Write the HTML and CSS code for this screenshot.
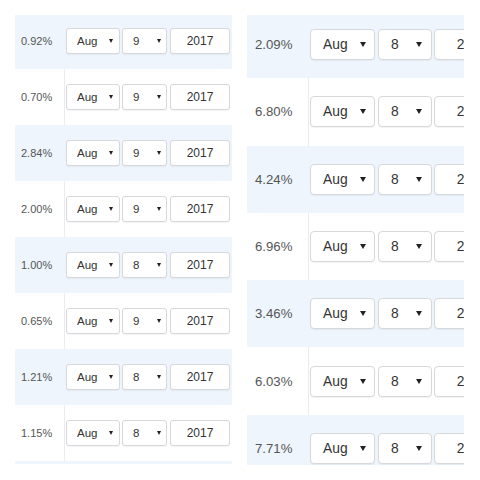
FILE: index.html
```
<!DOCTYPE html>
<html>
<head>
<meta charset="utf-8">
<link rel="stylesheet" href="styles.css">
</head>
<body>
<div class="wrap">
  <div class="panel sm">
    <div class="inner">
      <div class="row alt"><div class="pct">0.92%</div><div class="ctrl"><div class="sel mon"><span>Aug</span><i class="caret"></i></div><div class="sel day"><span>9</span><i class="caret"></i></div><div class="inp">2017</div></div></div>
      <div class="row"><div class="pct">0.70%</div><div class="ctrl"><div class="sel mon"><span>Aug</span><i class="caret"></i></div><div class="sel day"><span>9</span><i class="caret"></i></div><div class="inp">2017</div></div></div>
      <div class="row alt"><div class="pct">2.84%</div><div class="ctrl"><div class="sel mon"><span>Aug</span><i class="caret"></i></div><div class="sel day"><span>9</span><i class="caret"></i></div><div class="inp">2017</div></div></div>
      <div class="row"><div class="pct">2.00%</div><div class="ctrl"><div class="sel mon"><span>Aug</span><i class="caret"></i></div><div class="sel day"><span>9</span><i class="caret"></i></div><div class="inp">2017</div></div></div>
      <div class="row alt"><div class="pct">1.00%</div><div class="ctrl"><div class="sel mon"><span>Aug</span><i class="caret"></i></div><div class="sel day"><span>8</span><i class="caret"></i></div><div class="inp">2017</div></div></div>
      <div class="row"><div class="pct">0.65%</div><div class="ctrl"><div class="sel mon"><span>Aug</span><i class="caret"></i></div><div class="sel day"><span>9</span><i class="caret"></i></div><div class="inp">2017</div></div></div>
      <div class="row alt"><div class="pct">1.21%</div><div class="ctrl"><div class="sel mon"><span>Aug</span><i class="caret"></i></div><div class="sel day"><span>8</span><i class="caret"></i></div><div class="inp">2017</div></div></div>
      <div class="row"><div class="pct">1.15%</div><div class="ctrl"><div class="sel mon"><span>Aug</span><i class="caret"></i></div><div class="sel day"><span>8</span><i class="caret"></i></div><div class="inp">2017</div></div></div>
      <div class="row alt"></div>
    </div>
  </div>
  <div class="panel lg">
    <div class="inner">
      <div class="row alt"><div class="pct">2.09%</div><div class="ctrl"><div class="sel mon"><span>Aug</span><i class="caret"></i></div><div class="sel day"><span>8</span><i class="caret"></i></div><div class="inp">2017</div></div></div>
      <div class="row"><div class="pct">6.80%</div><div class="ctrl"><div class="sel mon"><span>Aug</span><i class="caret"></i></div><div class="sel day"><span>8</span><i class="caret"></i></div><div class="inp">2017</div></div></div>
      <div class="row alt"><div class="pct">4.24%</div><div class="ctrl"><div class="sel mon"><span>Aug</span><i class="caret"></i></div><div class="sel day"><span>8</span><i class="caret"></i></div><div class="inp">2017</div></div></div>
      <div class="row"><div class="pct">6.96%</div><div class="ctrl"><div class="sel mon"><span>Aug</span><i class="caret"></i></div><div class="sel day"><span>8</span><i class="caret"></i></div><div class="inp">2017</div></div></div>
      <div class="row alt"><div class="pct">3.46%</div><div class="ctrl"><div class="sel mon"><span>Aug</span><i class="caret"></i></div><div class="sel day"><span>8</span><i class="caret"></i></div><div class="inp">2017</div></div></div>
      <div class="row"><div class="pct">6.03%</div><div class="ctrl"><div class="sel mon"><span>Aug</span><i class="caret"></i></div><div class="sel day"><span>8</span><i class="caret"></i></div><div class="inp">2017</div></div></div>
      <div class="row alt"><div class="pct">7.71%</div><div class="ctrl"><div class="sel mon"><span>Aug</span><i class="caret"></i></div><div class="sel day"><span>8</span><i class="caret"></i></div><div class="inp">2017</div></div></div>
    </div>
  </div>
</div>
</body>
</html>
```
FILE: styles.css
```
html, body {
  margin: 0;
  padding: 0;
  background: #ffffff;
}
body {
  font-family: "Liberation Sans", Arial, sans-serif;
  color: #555;
}
.wrap {
  display: flex;
  align-items: flex-start;
  gap: 15px;
  padding: 15px 0 0 15px;
}
.panel {
  width: 217px;
  overflow: hidden;
  flex: none;
}
.inner {
  display: flex;
  flex-direction: column;
}
.row {
  display: flex;
  align-items: stretch;
  flex: none;
}
.row.alt {
  background: #eef5fd;
}
.pct {
  display: flex;
  align-items: center;
  box-sizing: border-box;
  flex: none;
  border-right: 1px solid #e9ecef;
  color: #555;
}
.row.alt .pct {
  border-right-color: transparent;
}
.ctrl {
  display: flex;
  align-items: center;
  flex: none;
}
.sel, .inp {
  box-sizing: border-box;
  background: #fff;
  border: 1px solid #d6d8db;
  box-shadow: 0 1px 1px rgba(0, 0, 0, 0.05);
  color: #333;
  display: flex;
  align-items: center;
  flex: none;
}
.sel {
  justify-content: space-between;
}
.inp {
  justify-content: center;
}
.caret {
  display: block;
  width: 0;
  height: 0;
  border-left-style: solid;
  border-right-style: solid;
  border-top-style: solid;
  border-left-color: transparent;
  border-right-color: transparent;
  border-top-color: #222;
}

/* small panel */
.sm {
  height: 449px;
  font-size: 11px;
}
.sm .inner {
  margin-top: -2px;
}
.sm .row {
  height: 56px;
}
.sm .pct {
  width: 50px;
  padding-left: 6px;
}
.sm .ctrl {
  padding-left: 1px;
  gap: 2px;
}
.sm .sel, .sm .inp {
  height: 26px;
  border-radius: 3px;
  font-size: 11.5px;
}
.sm .mon {
  width: 54px;
  padding: 0 6px 0 10px;
}
.sm .day {
  width: 45px;
  padding: 0 5px 0 10px;
}
.sm .inp {
  width: 60px;
  margin-left: 1px;
  font-size: 12px;
}
.sm .caret {
  border-left-width: 2.5px;
  border-right-width: 2.5px;
  border-top-width: 4px;
}

/* large panel */
.lg {
  height: 450px;
  font-size: 13.2px;
}
.lg .inner {
  margin-top: -4px;
}
.lg .row {
  height: 67.3px;
}
.lg .pct {
  width: 62px;
  padding-left: 8px;
}
.lg .ctrl {
  padding-left: 1px;
  gap: 2px;
}
.lg .sel, .lg .inp {
  height: 31px;
  border-radius: 4px;
  font-size: 13.8px;
}
.lg .mon {
  width: 65px;
  padding: 0 8px 0 12px;
}
.lg .day {
  width: 54px;
  padding: 0 9px 0 12px;
  margin-left: 1px;
}
.lg .inp {
  width: 72px;
  padding-left: 4px;
}
.lg .caret {
  border-left-width: 3px;
  border-right-width: 3px;
  border-top-width: 5px;
}
```
